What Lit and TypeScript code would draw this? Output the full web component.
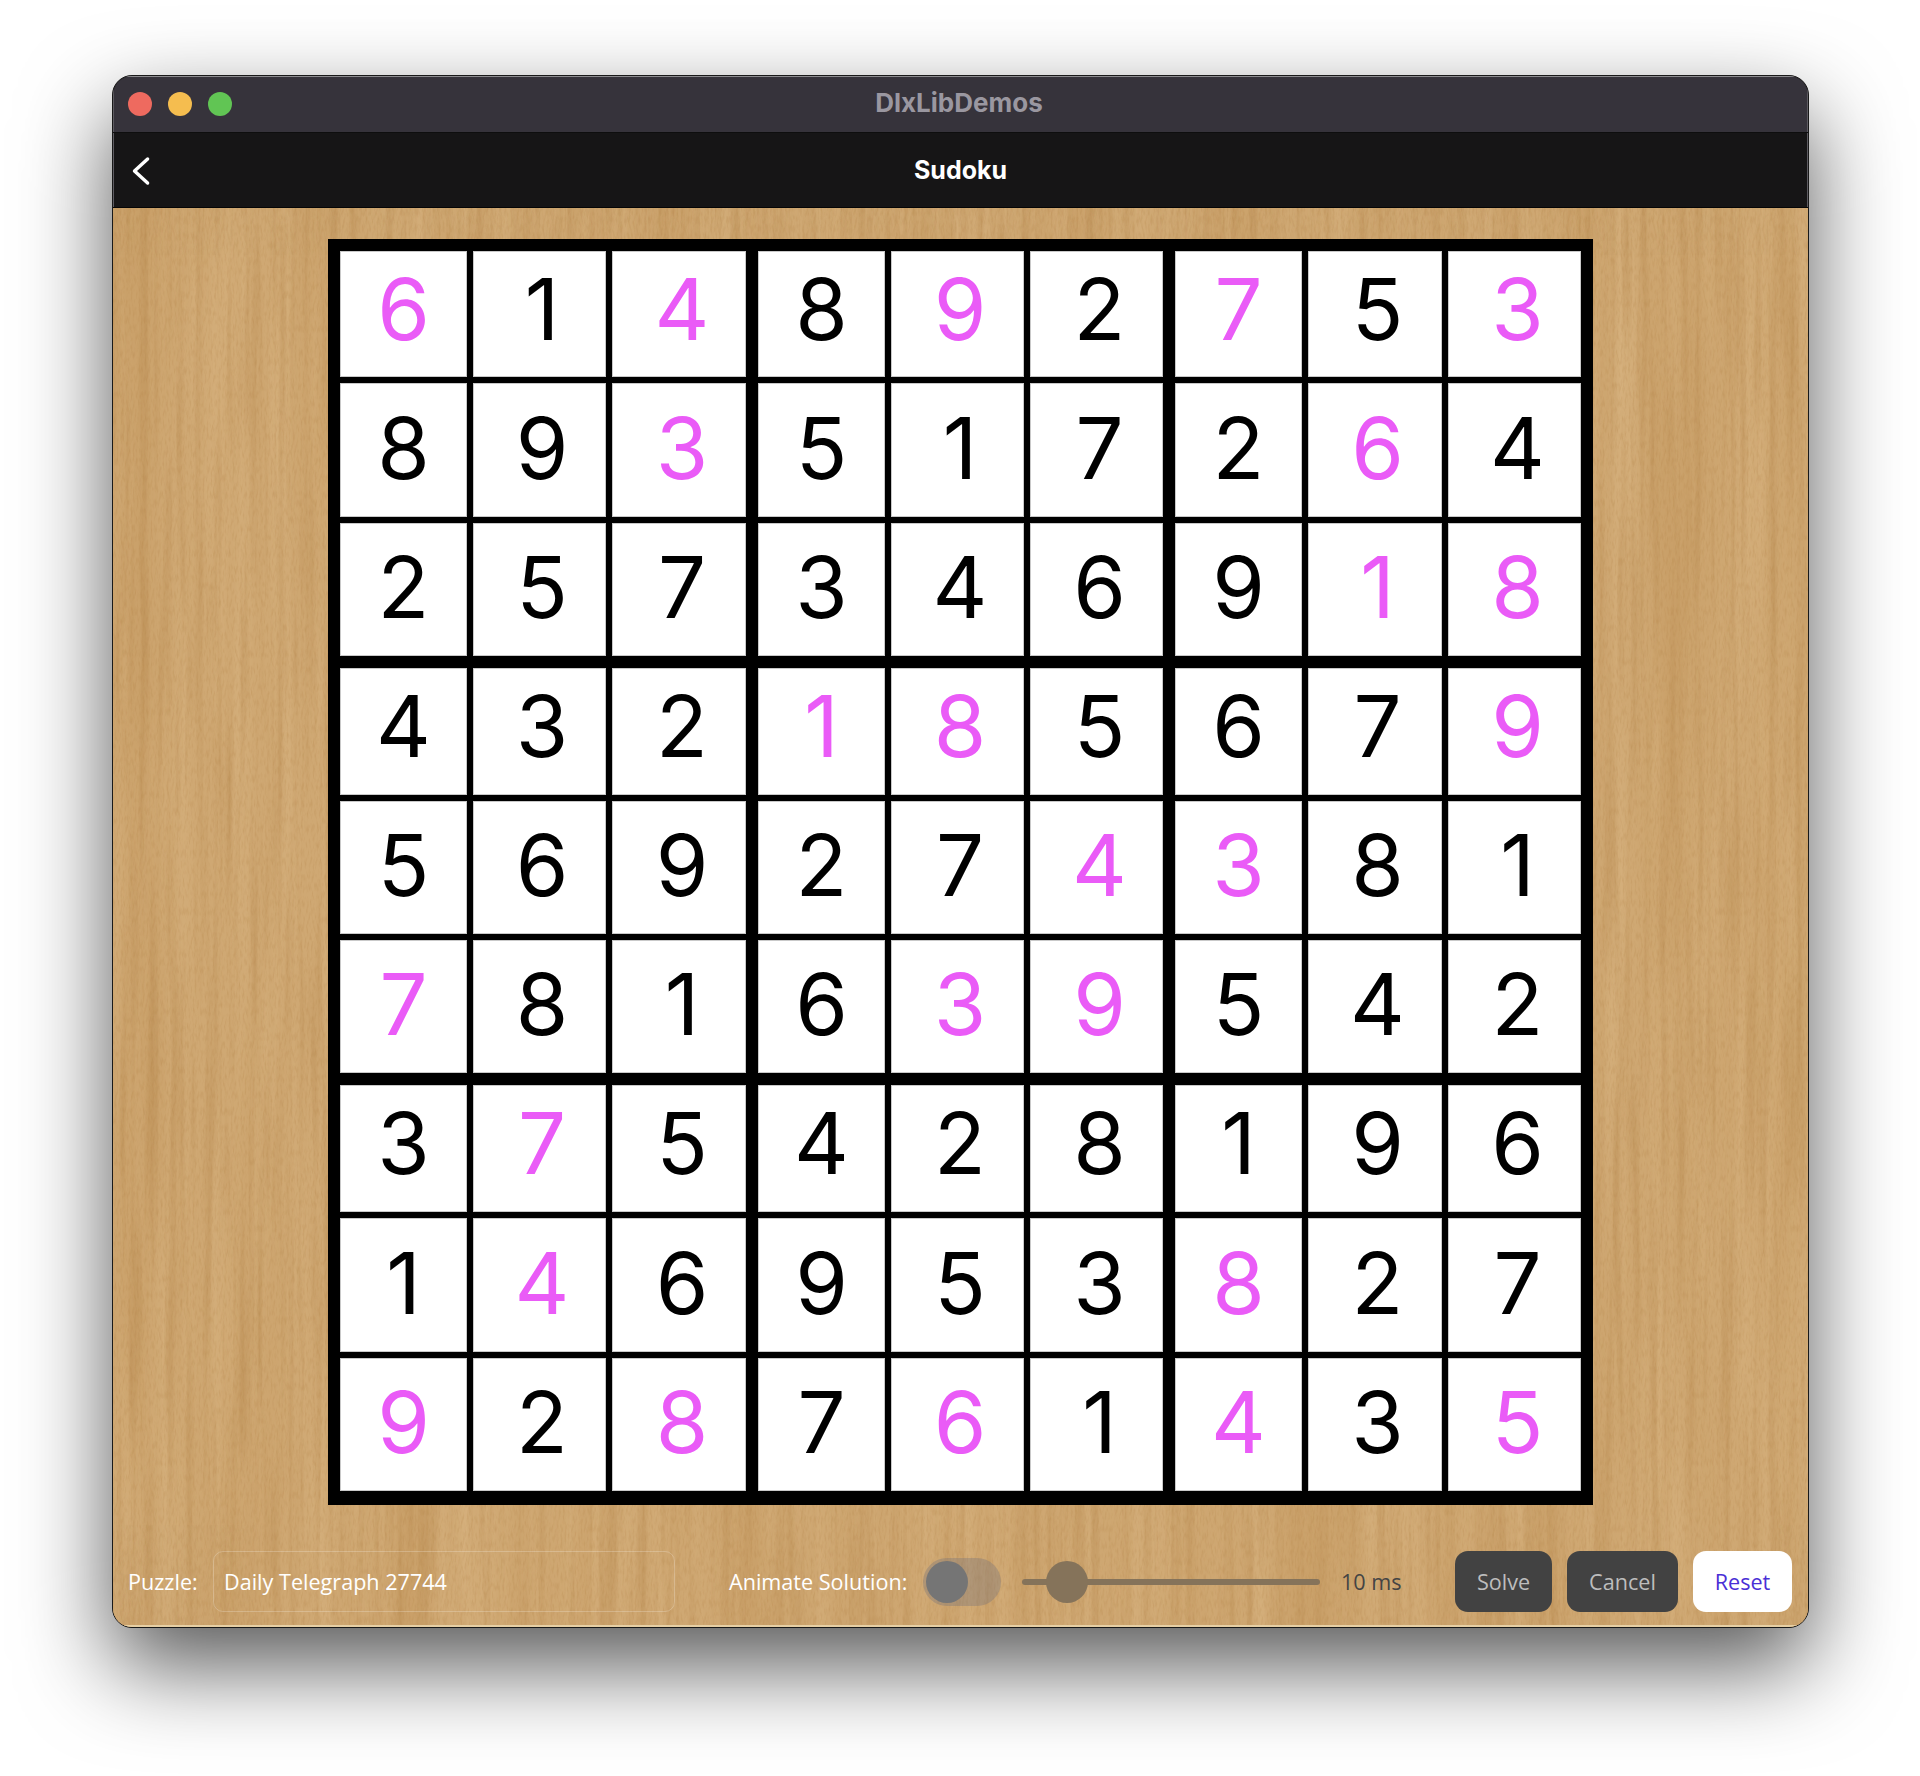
import { LitElement, html, css } from "lit";
import { customElement } from "lit/decorators.js";

const BOARD = ["614892753","893517264","257346918","432185679","569274381","781639542","375428196","146953827","928761435"];
const GIVEN = ["101010101","001000010","000000011","000110001","000001100","100011000","010000000","010000100","101010101"];

@customElement("app-root")
export class AppRoot extends LitElement {
  static styles = css`
    :host { display: block; box-sizing: border-box; height: 1776px; padding: 75px 0 0 112px; background: #fff; overflow: hidden; }
    * { box-sizing: border-box; }
    .window { width: 1697px; height: 1553px; border: 1px solid #191919; border-radius: 20px; overflow: hidden; display: flex; flex-direction: column; box-shadow: 0 38px 90px rgba(0,0,0,.66); background: #161516; position: relative; }
    .titlebar { height: 57px; flex: none; background: #36333b; border-bottom: 1px solid #0e0e0e; box-shadow: inset 0 1px 0 #8d8c8f, inset 1px 0 0 #5e5c62, inset -1px 0 0 #5e5c62; display: grid; grid-template-columns: 1fr auto 1fr; align-items: center; padding: 0 15px; }
    .lights { display: flex; gap: 16px; }
    .light { width: 24px; height: 24px; border-radius: 50%; }
    .red { background: #ee6a5f; }
    .yellow { background: #f5bd4f; }
    .green { background: #61c554; }
    .app-title { font: 700 26px Inter, "Liberation Sans", sans-serif; color: #9a97a0; margin: -3px 0 0 -3px; }
    .header { height: 75px; flex: none; background: #161516; border-bottom: 1px solid #050505; box-shadow: inset 1px 0 0 #5e5c62, inset -1px 0 0 #5e5c62; display: grid; grid-template-columns: 1fr auto 1fr; align-items: center; padding: 0 17px; }
    .back { display: block; width: 24px; height: 34px; }
    .page-title { font: 700 25px Inter, "Liberation Sans", sans-serif; color: #fff; }
    .wood { flex: 1; position: relative; display: flex; flex-direction: column; align-items: center; padding-top: 31px; background: #cfa873; }
    .texture { position: absolute; inset: 0; width: 100%; height: 100%; display: block; }
    .board { position: relative; width: 1265px; height: 1266px; flex: none; background: #000; padding: 12px 12px 13px 12px; display: grid;
      grid-template-columns: 127px 6px 133px 6px 134px 12px 127px 6px 133px 6px 133px 12px 127px 6px 134px 6px 133px;
      grid-template-rows: 126px 6px 134px 6px 133px 12px 127px 6px 133px 6px 133px 12px 127px 6px 134px 6px 133px; }
    .cell { background: #fff; box-shadow: inset 0 0 0 1px #c9c9c9; display: flex; align-items: center; justify-content: center; font: 400 85px/1 Inter, "Liberation Sans", Arial, sans-serif; color: #000; padding-bottom: 10px; }
    .cell.given { color: #ea5bf7; }
    .cell.x1 { padding-left: 5px; }
    .cell.x2 { padding-left: 6px; }
    .cell.y1 { padding-bottom: 4px; }
    .cell.y2 { padding-bottom: 5px; }
    .footer { position: relative; width: 100%; display: flex; align-items: center; margin-top: 46px; padding: 0 16px 0 15px; height: 61px; font: 400 21.6px "Open Sans", sans-serif; color: #fff; }
    .label { flex: none; }
    .puzzle { width: 70px; }
    .field { width: 462px; height: 61px; margin-left: 15px; flex: none; border: 1px solid rgba(255,255,255,.22); border-radius: 10px; display: flex; align-items: center; padding-left: 10px; }
    .animate { margin-left: 54px; width: 179px; white-space: nowrap; }
    .toggle { width: 78px; height: 48px; margin-left: 15px; flex: none; border-radius: 24px; background: rgba(110,110,120,.33); padding: 3px; }
    .knob { width: 42px; height: 42px; border-radius: 50%; background: #757575; }
    .slider { width: 298px; height: 42px; margin-left: 21px; flex: none; display: flex; align-items: center; position: relative; }
    .track { width: 100%; height: 6px; border-radius: 3px; background: #85735a; }
    .thumb { position: absolute; left: 24px; top: 0; width: 42px; height: 42px; border-radius: 50%; background: #85735a; }
    .ms { margin-left: 21px; color: #444; flex: none; }
    .buttons { margin-left: auto; display: flex; gap: 15px; }
    .btn { height: 61px; border-radius: 13px; background: #424242; color: #bdbdbd; display: flex; align-items: center; justify-content: center; flex: none; }
    .solve { width: 97px; }
    .cancel { width: 111px; }
    .reset { width: 99px; background: #fff; color: #4a2fd6; }
  `;

  render() {
    return html`
      <div class="window">
        <div class="titlebar">
          <div class="lights"><div class="light red"></div><div class="light yellow"></div><div class="light green"></div></div>
          <div class="app-title">DlxLibDemos</div>
          <div></div>
        </div>
        <div class="header">
          <svg class="back" viewBox="0 0 24 34" fill="none" stroke="#fff" stroke-width="3.4" stroke-linecap="round" stroke-linejoin="round">
            <path d="M17.6 6 L4.5 18 L17.6 30"/>
          </svg>
          <div class="page-title">Sudoku</div>
          <div></div>
        </div>
        <div class="wood">
          <svg class="texture" xmlns="http://www.w3.org/2000/svg">
            <defs>
              <filter id="broad" x="0" y="0" width="100%" height="100%" color-interpolation-filters="sRGB">
                <feTurbulence type="fractalNoise" baseFrequency="0.012 0.0008" numOctaves="3" seed="11"/>
                <feColorMatrix values="0 0 0 0 0.70  0 0 0 0 0.50  0 0 0 0 0.25  2.2 0 0 0 -0.95"/>
              </filter>
              <filter id="streak" x="0" y="0" width="100%" height="100%" color-interpolation-filters="sRGB">
                <feTurbulence type="fractalNoise" baseFrequency="0.11 0.004" numOctaves="3" seed="4"/>
                <feColorMatrix values="0 0 0 0 0.64  0 0 0 0 0.44  0 0 0 0 0.2  2.2 0 0 0 -1.0"/>
              </filter>
              <filter id="light" x="0" y="0" width="100%" height="100%" color-interpolation-filters="sRGB">
                <feTurbulence type="fractalNoise" baseFrequency="0.05 0.002" numOctaves="3" seed="23"/>
                <feColorMatrix values="0 0 0 0 0.88  0 0 0 0 0.75  0 0 0 0 0.56  2.2 0 0 0 -1.0"/>
              </filter>
              <filter id="speck" x="0" y="0" width="100%" height="100%" color-interpolation-filters="sRGB">
                <feTurbulence type="fractalNoise" baseFrequency="0.5 0.12" numOctaves="2" seed="2"/>
                <feColorMatrix values="0 0 0 0 0.66  0 0 0 0 0.46  0 0 0 0 0.22  1.6 0 0 0 -0.72"/>
              </filter>
            </defs>
            <rect width="100%" height="100%" fill="#cfa873"/>
            <rect width="100%" height="100%" filter="url(#broad)" opacity=".26"/>
            <rect width="100%" height="100%" filter="url(#light)" opacity=".35"/>
            <rect width="100%" height="100%" filter="url(#streak)" opacity=".26"/>
            <rect width="100%" height="100%" filter="url(#speck)" opacity=".3"/>
            <rect y="1417" width="100%" height="2" fill="#e6cfa4"/>
          </svg>
          <div class="board">
            ${BOARD.map((row, r) => [...row].map((d, c) => html`
              <div class="cell ${GIVEN[r][c] === "1" ? "given" : ""} ${c % 3 ? `x${c % 3}` : ""} ${r % 3 ? `y${r % 3}` : ""}" style="grid-column:${2 * c + 1};grid-row:${2 * r + 1}">${d}</div>`))}
          </div>
          <div class="footer">
            <div class="label puzzle">Puzzle:</div>
            <div class="field">Daily Telegraph 27744</div>
            <div class="label animate">Animate Solution:</div>
            <div class="toggle"><div class="knob"></div></div>
            <div class="slider"><div class="track"></div><div class="thumb"></div></div>
            <div class="ms">10 ms</div>
            <div class="buttons">
              <div class="btn solve">Solve</div>
              <div class="btn cancel">Cancel</div>
              <div class="btn reset">Reset</div>
            </div>
          </div>
        </div>
      </div>
    `;
  }
}
